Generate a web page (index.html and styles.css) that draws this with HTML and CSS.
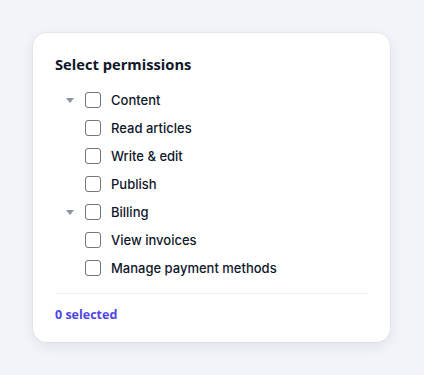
FILE: index.html
```html
<!DOCTYPE html>
<html lang="en">
<head>
  <meta charset="UTF-8">
  <title>Select permissions</title>
  <link rel="stylesheet" href="styles.css">
</head>
<body>
  <div class="card">
    <h2>Select permissions</h2>
    <ul class="tree">
      <li class="row parent">
        <span class="caret"></span>
        <input type="checkbox">
        <span class="label">Content</span>
      </li>
      <li class="row child"><input type="checkbox"><span class="label">Read articles</span></li>
      <li class="row child"><input type="checkbox"><span class="label">Write &amp; edit</span></li>
      <li class="row child"><input type="checkbox"><span class="label">Publish</span></li>
      <li class="row parent">
        <span class="caret"></span>
        <input type="checkbox">
        <span class="label">Billing</span>
      </li>
      <li class="row child"><input type="checkbox"><span class="label">View invoices</span></li>
      <li class="row child"><input type="checkbox"><span class="label">Manage payment methods</span></li>
    </ul>
    <div class="footer">0 selected</div>
  </div>
</body>
</html>
```

FILE: styles.css
```css
body {
  margin: 0;
  padding: 33px;
  background: #f1f4f8;
  color: #111827;
  font-family: "Open Sans", "Noto Sans", Arial, sans-serif;
}
.card {
  width: 313px;
  background: #fff;
  border-radius: 14px;
  box-shadow: 0 4px 14px rgba(15, 23, 42, 0.08), 0 0 0 1px rgba(15, 23, 42, 0.03);
  padding: 20px 22px 19px;
}
.card h2 {
  margin: 0 0 11px;
  font-size: 14.7px;
  line-height: 22px;
  font-weight: 700;
  color: #0f172a;
}
.tree {
  list-style: none;
  margin: 0;
  padding: 0 0 0 8px;
}
.row {
  display: flex;
  align-items: center;
  height: 28px;
  font-family: Inter, "Open Sans", sans-serif;
  font-size: 13px;
}
.caret {
  width: 0;
  height: 0;
  border-left: 4px solid transparent;
  border-right: 4px solid transparent;
  border-top: 5px solid #8b95a7;
  margin: 0 11px 0 3px;
}
.row.child {
  padding-left: 22px;
}
.row input {
  appearance: none;
  width: 16px;
  height: 16px;
  margin: 0 10px 0 0;
  border: 1px solid #767676;
  border-radius: 3px;
  background: #fff;
}
.label {
  color: #0f172a;
  font-weight: 500;
}
.footer {
  margin-top: 11px;
  border-top: 1px solid #eef0f3;
  padding-top: 12px;
  font-size: 12.5px;
  font-weight: 700;
  color: #4f46e5;
}
```
